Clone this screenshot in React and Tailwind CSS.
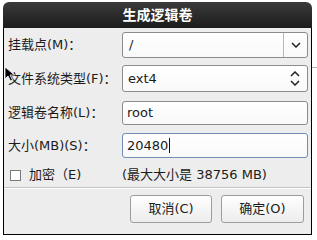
import React from 'react';

const font = { fontFamily: '"DejaVu Sans", "Noto Sans CJK SC", sans-serif' };

function Chevron({ up = false }) {
  return (
    <svg width="10" height="6" viewBox="0 0 10 6" className="block">
      <path
        d={up ? 'M1 5 L5 1 L9 5' : 'M1 1 L5 5 L9 1'}
        fill="none"
        stroke="#222"
        strokeWidth="1.5"
      />
    </svg>
  );
}

function Field({ children, focused = false, className = '' }) {
  return (
    <div
      className={`flex items-center rounded-[3px] border bg-gradient-to-b from-white to-[#f9f9f9] ${
        focused ? 'border-[#6f8db5]' : 'border-[#8c8c8c]'
      } ${className}`}
    >
      {children}
    </div>
  );
}

export default function App() {
  return (
    <div
      className="relative w-[317px] h-[240px] overflow-hidden bg-white text-[13px] text-[#1b1b1b]"
      style={font}
    >
      {/* bits of the window behind */}
      <div className="absolute left-[312px] top-[67px] h-px w-[5px] bg-[#b5b5b5]" />

      <div className="ml-[3px] mt-[2px] flex h-[233px] w-[309px] flex-col">
        {/* title bar */}
        <div className="flex h-[26px] items-center justify-center rounded-t-[6px] bg-gradient-to-b from-[#3b3b3b] to-[#1c1c1c]">
          <span className="text-[14px] font-bold text-white">生成逻辑卷</span>
        </div>

        {/* body */}
        <div className="flex flex-1 flex-col border-x border-b border-black bg-[#ededed] pt-[4px]">
          <div className="grid grid-cols-[118px_186px] gap-y-0">
            <div className="flex h-[26px] items-center pl-[4px]">挂载点(M)：</div>
            <Field className="h-[26px]">
              <span className="flex-1 pl-[6px]">/</span>
              <div className="flex h-full w-[24px] items-center justify-center border-l border-[#b8b8b8]">
                <Chevron />
              </div>
            </Field>

            <div className="mt-[7px] flex h-[27px] items-center pl-[4px]">文件系统类型(F)：</div>
            <Field className="mt-[7px] h-[27px]">
              <span className="flex-1 pl-[5px]">ext4</span>
              <div className="flex h-full w-[24px] flex-col items-center justify-center gap-[3px]">
                <Chevron up />
                <Chevron />
              </div>
            </Field>

            <div className="mt-[9px] flex h-[24px] items-center pl-[4px]">逻辑卷名称(L)：</div>
            <Field className="mt-[9px] h-[24px]">
              <span className="pl-[4px]">root</span>
            </Field>

            <div className="mt-[8px] flex h-[25px] items-center pl-[4px]">大小(MB)(S)：</div>
            <Field focused className="mt-[8px] h-[25px]">
              <span className="pl-[4px]">20480</span>
              <span className="ml-px h-[15px] w-px bg-[#111]" />
            </Field>

            <div className="mt-[7px] flex h-[20px] items-center pl-[6px]">
              <span className="h-[11px] w-[11px] border border-[#7a7a7a] bg-white" />
              <span className="ml-[8px]">加密（E)</span>
            </div>
            <div className="mt-[7px] flex h-[20px] items-center">(最大大小是 38756 MB)</div>
          </div>

          <div className="mt-[2px] h-px bg-[#c4c4c4]" />
          <div className="h-px bg-white" />

          <div className="mt-[6px] flex justify-end gap-[9px] pr-[7px]">
            <button className="h-[28px] w-[82px] rounded-[3px] border border-[#9d9d9d] bg-gradient-to-b from-white to-[#ececec]">
              取消(C)
            </button>
            <button className="h-[28px] w-[83px] rounded-[3px] border border-[#9d9d9d] bg-gradient-to-b from-white to-[#ececec]">
              确定(O)
            </button>
          </div>
        </div>
      </div>

      {/* mouse pointer */}
      <svg
        className="absolute left-[4px] top-[66px]"
        width="12"
        height="16"
        viewBox="0 0 12 16"
      >
        <path d="M1 1 L1 13 L4 10 L6.5 15 L8.5 14 L6 9 L10.5 9 Z" fill="#000" stroke="#fff" strokeWidth="0.8" />
      </svg>
    </div>
  );
}
